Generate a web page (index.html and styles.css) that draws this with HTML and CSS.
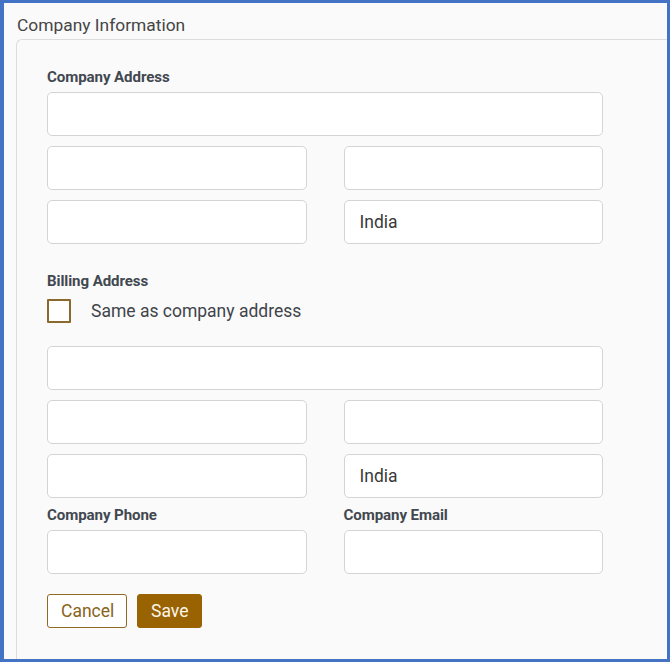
FILE: index.html
```html
<!DOCTYPE html>
<html lang="en">
<head>
<meta charset="utf-8">
<title>Company Information</title>
<link rel="stylesheet" href="styles.css">
</head>
<body>
<div class="frame">
  <h2 class="title">Company Information</h2>
  <div class="panel">
    <section class="group">
      <div class="field-label">Company Address</div>
      <div class="grid">
        <input class="input span-2" type="text">
        <input class="input" type="text">
        <input class="input" type="text">
        <input class="input" type="text">
        <input class="input" type="text" value="India">
      </div>
    </section>

    <section class="group billing">
      <div class="field-label">Billing Address</div>
      <label class="check-row">
        <span class="checkbox"></span>
        <span class="check-text">Same as company address</span>
      </label>
      <div class="grid grid-billing">
        <input class="input span-2" type="text">
        <input class="input" type="text">
        <input class="input" type="text">
        <input class="input" type="text">
        <input class="input" type="text" value="India">
      </div>
    </section>

    <div class="grid contact">
      <div class="field">
        <div class="field-label">Company Phone</div>
        <input class="input" type="text">
      </div>
      <div class="field">
        <div class="field-label">Company Email</div>
        <input class="input" type="text">
      </div>
    </div>

    <div class="actions">
      <button class="btn btn-outline" type="button">Cancel</button>
      <button class="btn btn-primary" type="button">Save</button>
    </div>
  </div>
</div>
</body>
</html>
```

FILE: styles.css
```css
* {
  box-sizing: border-box;
}

html, body {
  margin: 0;
  padding: 0;
}

body {
  width: 670px;
  height: 662px;
  overflow: hidden;
  font-family: Roboto, "Liberation Sans", Arial, sans-serif;
  background: #4472c4;
}

.frame {
  width: 670px;
  height: 662px;
  border: 3px solid #4472c4;
  border-left-width: 4px;
  background: #fafafa;
  padding: 12px 0 0 13px;
  overflow: hidden;
}

.title {
  margin: 0 0 4px 0;
  font-size: 17.4px;
  line-height: 20px;
  font-weight: 400;
  color: #454545;
}

.panel {
  margin-left: -1px;
  width: 700px;
  border: 1px solid #dadcde;
  border-right: none;
  border-radius: 6px 0 0 0;
  background: #fafafa;
  padding: 29px 0 60px 30px;
}

.group {
  width: 556px;
}

.field-label {
  font-size: 15.1px;
  line-height: 17px;
  font-weight: 700;
  color: #424850;
  margin-bottom: 6px;
  letter-spacing: -0.1px;
}

.grid {
  display: grid;
  grid-template-columns: 1fr 1fr;
  column-gap: 37px;
  row-gap: 10px;
  width: 556px;
}

.span-2 {
  grid-column: span 2;
}

.input {
  display: block;
  width: 100%;
  height: 44px;
  border: 1px solid #d3d4d6;
  border-radius: 5px;
  background: #fff;
  padding: 0 15px;
  font-family: Roboto, "Liberation Sans", Arial, sans-serif;
  font-size: 17.5px;
  color: #3a3a3a;
  outline: none;
}

.billing {
  margin-top: 29px;
}

.check-row {
  display: flex;
  align-items: center;
  gap: 20px;
  margin-top: 9px;
  height: 24px;
}

.checkbox {
  width: 24px;
  height: 24px;
  border: 2px solid #8a6a2c;
  border-radius: 1px;
  background: #fff;
  flex: none;
}

.check-text {
  font-size: 17.5px;
  color: #40444a;
}

.grid-billing {
  margin-top: 23px;
}

.contact {
  margin-top: 9px;
}

.field .field-label {
  margin-bottom: 6px;
}

.actions {
  display: flex;
  gap: 10px;
  margin-top: 20px;
}

.btn {
  height: 34px;
  padding: 0 13px;
  border-radius: 3px;
  font-family: Roboto, "Liberation Sans", Arial, sans-serif;
  font-size: 17.5px;
  cursor: pointer;
}

.btn-outline {
  width: 80px;
  background: #fff;
  border: 1px solid #8f6a22;
  color: #8a6318;
}

.btn-primary {
  width: 65px;
  background: #9a6302;
  border: 1px solid #9a6302;
  color: #fbf6ec;
}
```
